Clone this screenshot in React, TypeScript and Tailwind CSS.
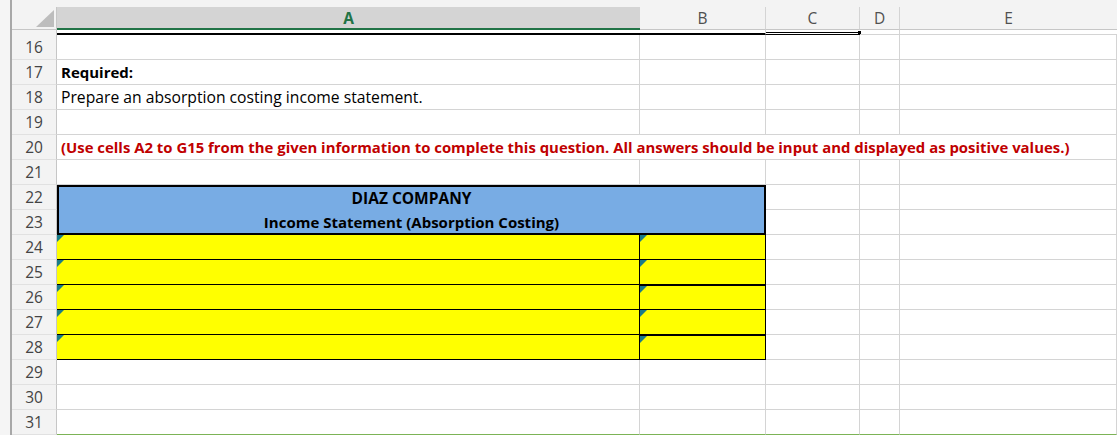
import React from 'react';

const cols = "grid grid-cols-[45px_583px_126px_94px_40px_217px]";
const gridCell = "h-[25px] border-r border-b border-r-[#d4d4d4] border-b-[#d4d4d4]";
const lastCell = "h-[25px] border-r border-b border-r-[#d4d4d4] border-b-[#7cb356]";
const headCell = "h-[25px] bg-[#f3f3f3] border-r border-b border-r-[#c6c6c6] border-b-[#e1e1e1] flex items-end justify-center pb-[2px] text-[15.5px] leading-[20px] text-[#444]";
const yellow = "relative h-[25px] bg-[#ffff00] border-r border-b border-black";

function Marker() {
  // small teal triangle in the corner of the input cells
  return (
    <svg className="absolute left-0 top-0" width="7" height="7" viewBox="0 0 7 7">
      <polygon points="0,0 7,0 0,7" fill="#1a7c89" />
    </svg>
  );
}

function PlainRow({ n, last }: { n: number; last?: boolean }) {
  const c = last ? lastCell : gridCell;
  return (
    <>
      <div className={headCell}>{n}</div>
      <div className={c} />
      <div className={c} />
      <div className={c} />
      <div className={c} />
      <div className={c} />
    </>
  );
}

function TextRow({ n, children }: { n: number; children: React.ReactNode }) {
  return (
    <>
      <div className={headCell}>{n}</div>
      <div className={gridCell + " flex items-end pb-[2px] pl-[4px] leading-[20px] text-black whitespace-nowrap"}>{children}</div>
      <div className={gridCell} />
      <div className={gridCell} />
      <div className={gridCell} />
      <div className={gridCell} />
    </>
  );
}

function InputRow({ n, thickTop }: { n: number; thickTop?: boolean }) {
  return (
    <>
      <div className={headCell}>{n}</div>
      <div className={yellow}>
        <Marker />
      </div>
      <div className={thickTop ? yellow + " border-t" : yellow}>
        <Marker />
      </div>
      <div className={gridCell} />
      <div className={gridCell} />
      <div className={gridCell} />
    </>
  );
}

export default function App() {
  return (
    <div className="w-[1117px] h-[435px] overflow-hidden bg-white flex font-['Open_Sans',sans-serif]">
      <div className="w-[12px] h-full bg-[#f5f5f5] border-r-2 border-[#a8a8a8] shrink-0" />
      <div className="flex-1 flex flex-col">
        <div className="h-[7px] shrink-0 bg-[#f3f3f3]" />
        {/* column headers */}
        <div className={cols + " h-[23px] shrink-0 text-[15.5px] leading-[20px] text-[#505050]"}>
          <div className="relative bg-[#f3f3f3] border-r border-b border-r-[#c6c6c6] border-b-[#c6c6c6]">
            <svg className="absolute left-[24px] top-[3px]" width="18" height="17" viewBox="0 0 18 17">
              <polygon points="0,17 18,17 18,0" fill="#bdbdbd" />
            </svg>
          </div>
          <div className="bg-[#d4d4d4] border-b-2 border-[#217346] flex items-center justify-center font-bold text-[#217346]">A</div>
          <div className="bg-[#f3f3f3] border-r border-b border-r-[#d4d4d4] border-b-[#c6c6c6] flex items-center justify-center">B</div>
          <div className="bg-[#f3f3f3] border-r border-b border-r-[#d4d4d4] border-b-[#c6c6c6] flex items-center justify-center">C</div>
          <div className="bg-[#f3f3f3] border-r border-b border-r-[#d4d4d4] border-b-[#c6c6c6] flex items-center justify-center">D</div>
          <div className="bg-[#f3f3f3] border-b border-[#c6c6c6] flex items-center justify-center">E</div>
        </div>

        <div className={cols + " grid-rows-[5px_repeat(16,25px)] shrink-0"}>
          {/* end of row 15 */}
          <div className="h-[5px] bg-[#f3f3f3] border-r border-r-[#c6c6c6]" />
          <div className="h-[5px] border-b-2 border-black" />
          <div className="h-[5px] border-b-2 border-r border-b-black border-r-[#d4d4d4]" />
          <div className="relative h-[5px] border-b-[3px] border-double border-black">
            <div className="absolute right-[-1px] top-[1px] w-[3px] h-[3px] bg-black" />
          </div>
          <div className="h-[5px] border-r border-b border-r-[#d4d4d4] border-b-[#d4d4d4]" />
          <div className="h-[5px] border-b border-[#d4d4d4]" />

          <PlainRow n={16} />
          <TextRow n={17}>
            <span className="font-bold text-[15px]">Required:</span>
          </TextRow>
          <TextRow n={18}>
            <span className="text-[15.7px]">Prepare an absorption costing income statement.</span>
          </TextRow>
          <PlainRow n={19} />

          <div className={headCell}>20</div>
          <div className={gridCell + " col-span-5 flex items-end pb-[2px] pl-[4px] text-[14.9px] leading-[20px] font-bold text-[#c00000] whitespace-nowrap"}>
            (Use cells A2 to G15 from the given information to complete this question. All answers should be input and displayed as positive values.)
          </div>

          <PlainRow n={21} />

          <div className={headCell}>22</div>
          <div className="col-span-2 row-span-2 h-[50px] overflow-visible bg-[#78ace4] border-2 border-black flex flex-col items-center justify-center leading-[24px] font-bold text-black">
            <span className="text-[15.5px]">DIAZ COMPANY</span>
            <span className="text-[15px]">Income Statement (Absorption Costing)</span>
          </div>
          <div className={gridCell} />
          <div className={gridCell} />
          <div className={gridCell} />
          <div className={headCell}>23</div>
          <div className={gridCell} />
          <div className={gridCell} />
          <div className={gridCell} />

          <InputRow n={24} />
          <InputRow n={25} />
          <InputRow n={26} thickTop />
          <InputRow n={27} />
          <InputRow n={28} thickTop />

          <PlainRow n={29} />
          <PlainRow n={30} />
          <PlainRow n={31} last />
        </div>
      </div>
    </div>
  );
}
